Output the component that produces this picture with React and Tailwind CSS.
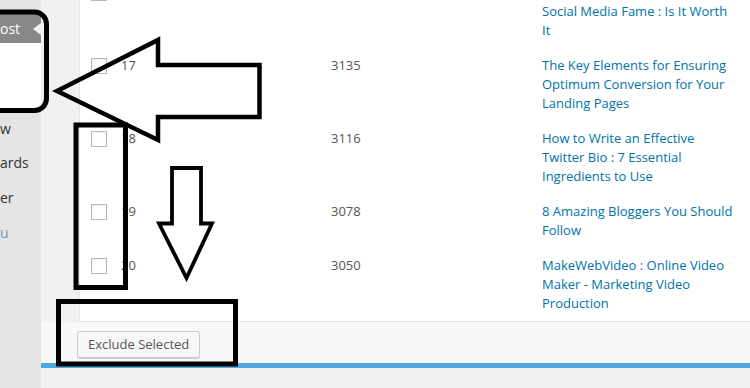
import React from 'react';

const rows = [
    { num: '', id: '', title: ['', 'Social Media Fame : Is It Worth It'] },
    { num: '17', id: '3135', title: ['The Key Elements for Ensuring Optimum Conversion for Your Landing Pages'] },
    { num: '18', id: '3116', title: ['How to Write an Effective Twitter Bio : 7 Essential Ingredients to Use'] },
    { num: '19', id: '3078', title: ['8 Amazing Bloggers You Should Follow'] },
    { num: '20', id: '3050', title: ['MakeWebVideo : Online Video Maker - Marketing Video Production'] },
];

const menuItems = [
    { label: 'w', cls: 'mt-[9px] text-[#333]' },
    { label: 'ards', cls: 'mt-[14px] text-[#333]' },
    { label: 'er', cls: 'mt-[15px] text-[#333]' },
    { label: 'u', cls: 'mt-[15px] text-[#7a9bb5]' },
];

const Sidebar = () => (
    <aside className="w-[41px] shrink-0 bg-[#e5e5e5] flex flex-col overflow-hidden">
        <div className="h-[14px]" />
        <div className="relative h-[29px] bg-[#888] text-white text-[14px] leading-[29px] whitespace-nowrap">
            ost
            <span className="absolute right-0 top-[9px] w-0 h-0 border-y-[6px] border-y-transparent border-r-[8px] border-r-[#f1f1f1]" />
        </div>
        <div className="h-[67px] bg-white" />
        {menuItems.map((item, idx) => (
            <div key={idx} className={`text-[14px] leading-[20px] whitespace-nowrap ${item.cls}`}>
                {item.label}
            </div>
        ))}
    </aside>
);

const Annotations = () => (
    <svg className="absolute inset-0 pointer-events-none" width="750" height="388" viewBox="0 0 750 388" fill="none" stroke="#000">
        {/* box round the menu */}
        <rect x="-30" y="12" width="76.5" height="98.5" rx="12" strokeWidth="5" />
        {/* big arrow pointing left */}
        <polygon points="57,91 158,40 158,65 259.5,65 259.5,117 158,117 158,140" strokeWidth="4.5" strokeLinejoin="miter" />
        {/* box round the checkboxes */}
        <rect x="76" y="125" width="49.5" height="162.5" strokeWidth="5" />
        {/* down arrow */}
        <polygon points="172,168 201,168 201,223.5 212,223.5 186.5,278 159,223.5 172,223.5" strokeWidth="3.8" />
        {/* box round the button */}
        <rect x="58.5" y="301.5" width="177" height="62.5" strokeWidth="5" />
    </svg>
);

export default function App() {
    return (
        <div className="relative w-[750px] h-[388px] overflow-hidden flex bg-[#f1f1f1]" style={{ fontFamily: '"Open Sans", "Liberation Sans", sans-serif' }}>
            <Sidebar />
            <main className="flex-1 flex flex-col">
                <div className="ml-[38px] mt-[-25px] bg-white border-l border-b border-[#e5e5e5]">
                    {rows.map((row, idx) => (
                        <div key={idx} className="grid grid-cols-[41px_210px_211px_1fr] text-[13px] leading-[19px] py-[8px]">
                            <div className="pl-[11px]">
                                <div className="mt-[2px] w-[16px] h-[16px] border border-[#b4b9be] bg-white shadow-[inset_0_1px_2px_rgba(0,0,0,0.07)]" />
                            </div>
                            <div className="text-[#555]">{row.num}</div>
                            <div className="text-[#555]">{row.id}</div>
                            <div className="w-[196px] text-[#0073aa]">
                                {row.title.map((t, i) => (
                                    <div key={i} className="min-h-[19px]">{t}</div>
                                ))}
                            </div>
                        </div>
                    ))}
                </div>
                <div className="bg-[#f8f8f8] pt-[9px] pb-[5px] pl-[36px]">
                    <button className="h-[27px] px-[10px] rounded-[3px] border border-[#ccc] bg-[#f7f7f7] shadow-[0_1px_0_#ccc] text-[13px] leading-[25px] text-[#555]">
                        Exclude Selected
                    </button>
                </div>
                <div className="h-[5px] bg-[#4fa8df]" />
            </main>
            <Annotations />
        </div>
    );
}
